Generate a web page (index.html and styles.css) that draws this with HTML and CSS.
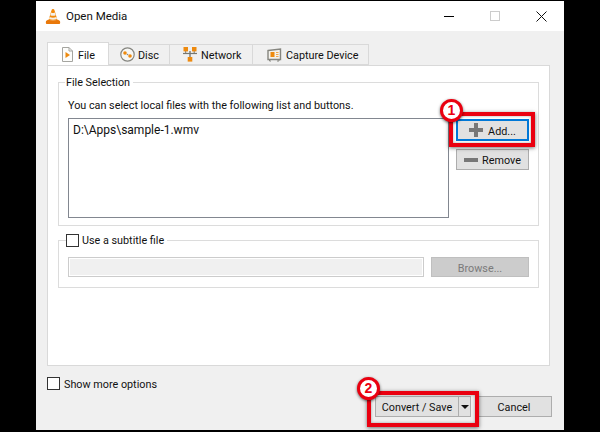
FILE: index.html
```html
<!DOCTYPE html>
<html lang="en">
<head>
<meta charset="utf-8">
<title>Open Media</title>
<link rel="stylesheet" href="styles.css">
</head>
<body>
<div class="window">
  <header class="titlebar">
    <svg class="app-icon" width="16" height="17" viewBox="0 0 16 17">
      <path d="M8 1 Q9.2 1 9.5 2.2 L12.6 12.5 H3.4 L6.5 2.2 Q6.8 1 8 1Z" fill="#f28a0c"/>
      <path d="M6.1 4.6 Q8 5.6 9.9 4.6 L10.7 7.2 Q8 8.4 5.3 7.2Z" fill="#f4f0ea"/>
      <path d="M4.6 9 Q8 10.4 11.4 9 L12 11 Q8 12.4 4 11Z" fill="#f4f0ea"/>
      <path d="M1 13 L3 11.8 Q8 13.4 13 11.8 L15 13 Q15.6 15.8 14.6 16 H1.4 Q.4 15.8 1 13Z" fill="#e9780a"/>
    </svg>
    <span class="title">Open Media</span>
    <div class="controls">
      <span class="ctl"><svg width="10" height="10" viewBox="0 0 10 10"><path d="M0 5.5H10" stroke="#000" fill="none"/></svg></span>
      <span class="ctl"><svg width="10" height="10" viewBox="0 0 10 10"><rect x=".5" y=".5" width="9" height="9" stroke="#ccc" fill="none"/></svg></span>
      <span class="ctl"><svg width="11" height="11" viewBox="0 0 11 11"><path d="M.5 .5L10.5 10.5M10.5 .5L.5 10.5" stroke="#111" fill="none"/></svg></span>
    </div>
  </header>

  <main class="body">
    <nav class="tabs">
      <div class="tab tab-file active">
        <svg width="11" height="15" viewBox="0 0 11 15"><path d="M.5 .5H7L10.5 4V14.5H.5Z" fill="#fdfdfb" stroke="#a5a5a0"/><path d="M7 .5V4H10.5" fill="none" stroke="#a5a5a0"/><path d="M3.5 5L8 8L3.5 11Z" fill="#ee8a0e"/></svg>
        <span class="t">File</span>
      </div>
      <div class="tab tab-disc">
        <svg width="15" height="15" viewBox="0 0 15 15"><circle cx="7.5" cy="7.5" r="6.7" fill="#f6f6f4" stroke="#85857f" stroke-width="1.2"/><circle cx="5" cy="6" r="1.8" fill="#ee8a0e"/><circle cx="10" cy="9" r="1.8" fill="#ee8a0e"/><circle cx="7.5" cy="7.5" r=".8" fill="#888"/></svg>
        <span class="t">Disc</span>
      </div>
      <div class="tab tab-net">
        <svg width="14" height="15" viewBox="0 0 14 15"><path d="M7 4V10" fill="none" stroke="#77776f" stroke-width="1.4"/><path d="M0 6.5H14" stroke="#77776f" stroke-width="1.2"/><path d="M2.7 4V6.5M11.2 4V6.5" stroke="#77776f"/><rect x=".5" y="0" width="4.5" height="4.4" fill="#ee8a0e"/><rect x="9" y="0" width="4.5" height="4.4" fill="#ee8a0e"/><rect x="4.7" y="10" width="4.6" height="4.6" fill="#ee8a0e"/></svg>
        <span class="t">Network</span>
      </div>
      <div class="tab tab-cap">
        <svg width="15" height="14" viewBox="0 0 15 14"><path d="M1 2.5L13.5 1V11.5H1Z" fill="#f4f2ec" stroke="#85857f" stroke-width="1.4"/><path d="M2.5 11.5V13H4M10 13H12V11.5" fill="none" stroke="#85857f"/><rect x="3.5" y="4" width="4" height="5" fill="#ee8a0e"/><path d="M9 4.5H11.5M9 6.5H11.5M9 8.5H11.5" stroke="#f0a850"/></svg>
        <span class="t">Capture Device</span>
      </div>
    </nav>

    <section class="pane">
      <div class="group group-files">
        <div class="legend"><span class="t">File Selection</span></div>
        <p class="hint">You can select local files with the following list and buttons.</p>
        <div class="file-row">
          <div class="list">D:\Apps\sample-1.wmv</div>
          <div class="side">
            <button class="btn btn-add"><svg width="14" height="14" viewBox="0 0 14 14"><path d="M5 0H9V5H14V9H9V14H5V9H0V5H5Z" fill="#777"/></svg><span class="t">Add...</span></button>
            <button class="btn btn-remove"><svg width="14" height="4" viewBox="0 0 14 4"><rect width="14" height="4" fill="#777"/></svg><span class="t">Remove</span></button>
          </div>
        </div>
      </div>
      <div class="group group-sub">
        <label class="legend legend-check"><span class="check"></span><span class="t">Use a subtitle file</span></label>
        <div class="sub-row">
          <div class="sub-input"></div>
          <button class="btn btn-browse"><span class="t">Browse...</span></button>
        </div>
      </div>
    </section>

    <label class="more"><span class="check"></span><span class="t">Show more options</span></label>

    <footer class="actions">
      <div class="btn btn-convert"><span class="convert-label"><span class="t">Convert / Save</span></span><span class="convert-arrow"><i></i></span></div>
      <button class="btn btn-cancel"><span class="t">Cancel</span></button>
    </footer>
  </main>
</div>

<div class="mark mark-add"></div>
<div class="mark mark-convert"></div>
<div class="badge badge-1">1</div>
<div class="badge badge-2">2</div>
</body>
</html>
```
FILE: styles.css
```css
* { box-sizing: border-box; }
html, body { margin: 0; height: 100%; }
body {
  width: 600px;
  height: 432px;
  background: #000;
  padding: 1px 36px 2px;
  position: relative;
  overflow: hidden;
  font-family: "Roboto", "Open Sans", sans-serif;
  font-size: 10.8px;
  color: #111;
}
.t { display: block; margin-top: 2px; }
.window { height: 429px; display: flex; flex-direction: column; background: #f0f0f0; }

.titlebar { height: 30px; flex: none; background: #fff; display: flex; align-items: center; padding-left: 9px; }
.app-icon { flex: none; }
.title { margin-left: 5px; font-size: 11.5px; }
.controls { margin-left: auto; display: flex; }
.ctl { width: 46px; height: 30px; display: flex; align-items: center; justify-content: center; }

.body { flex: 1; padding: 11px 14px 0 11px; display: flex; flex-direction: column; }

.tabs { display: flex; height: 23px; flex: none; align-items: flex-end; }
.tab {
  height: 21px;
  border: 1px solid #d9d9d9;
  border-left: 0;
  background: #f0f0f0;
  display: flex;
  align-items: center;
  gap: 4px;
}
.tab-file { width: 62px; padding-left: 14px; gap: 5px; }
.tab-disc { width: 61px; padding-left: 11px; gap: 3px; }
.tab-net { width: 83px; padding-left: 13px; }
.tab-cap { width: 116px; padding-left: 14px; }
.tab.active { height: 23px; background: #fff; border: 1px solid #d9d9d9; border-bottom: 0; }

.pane {
  height: 301px;
  flex: none;
  background: #fff;
  border: 1px solid #d9d9d9;
  padding: 16px 10px 0;
}
.group { border: 1px solid #dcdcdc; padding: 0 9px; }
.group-files { height: 144px; }
.group-sub { height: 48px; margin-top: 14px; }

.legend {
  display: flex;
  align-items: center;
  width: fit-content;
  height: 16px;
  margin: -9px 0 0 -2px;
  padding: 0 3px 0 0;
  background: #fff;
  line-height: 16px;
}
.group-files .legend { padding-left: 1px; margin-left: -3px; }
.legend-check { gap: 3px; }

.hint { margin: 8px 0 0; height: 16px; line-height: 16px; }
.file-row { margin-top: 4px; display: flex; gap: 7px; }
.list {
  width: 381px;
  height: 100px;
  border: 1px solid #828790;
  background: #fff;
  padding: 3px 4px 0;
  line-height: 16px;
  font-size: 12px;
}
.side { width: 73px; padding-top: 1px; display: flex; flex-direction: column; gap: 8px; }

.btn {
  font: inherit;
  color: inherit;
  margin: 0;
  padding: 0;
  background: #e1e1e1;
  border: 1px solid #adadad;
  display: flex;
  align-items: center;
  justify-content: center;
}
.btn-add { height: 22px; gap: 5px; border: 2px solid #0078d7; }
.btn-remove { height: 21px; gap: 4px; }

.check { width: 13px; height: 13px; flex: none; background: #fff; border: 1px solid #333; }

.sub-row { margin-top: 9px; display: flex; gap: 7px; }
.sub-input { width: 356px; height: 20px; background: #f0f0f0; border: 1px solid #ccc; box-shadow: inset 0 0 0 1px #fff; }
.btn-browse { width: 98px; height: 20px; background: #ccc; border-color: #bfbfbf; color: #7a7a7a; }

.more { display: flex; align-items: center; gap: 4px; margin-top: 9px; height: 16px; }
.actions { display: flex; justify-content: flex-end; gap: 5px; margin: 5px -2px 0 0; }
.btn-convert { width: 96px; height: 21px; }
.convert-label { width: 83px; height: 100%; border-right: 1px solid #adadad; display: flex; align-items: center; justify-content: center; }
.convert-arrow { flex: 1; display: flex; align-items: center; justify-content: center; }
.convert-arrow i { width: 0; height: 0; border: 4px solid transparent; border-top: 4px solid #111; border-bottom: 0; }
.btn-cancel { width: 76px; height: 21px; }

.mark { position: absolute; border: 4px solid #ea0010; box-shadow: 0 1px 4px rgba(0,0,0,.55), inset 0 0 3px rgba(0,0,0,.35); }
.mark-add { left: 449px; top: 112px; width: 86px; height: 35px; }
.mark-convert { left: 367px; top: 391px; width: 112px; height: 36px; }

.badge {
  position: absolute;
  width: 23px;
  height: 23px;
  border-radius: 50%;
  background: #fff;
  border: 3px solid #ea0010;
  box-shadow: 0 1px 3px rgba(0,0,0,.6);
  color: #ea0010;
  font: bold 14px/17px "Liberation Sans", sans-serif;
  text-align: center;
}
.badge-1 { left: 440px; top: 99px; }
.badge-2 { left: 357px; top: 377px; }
```
